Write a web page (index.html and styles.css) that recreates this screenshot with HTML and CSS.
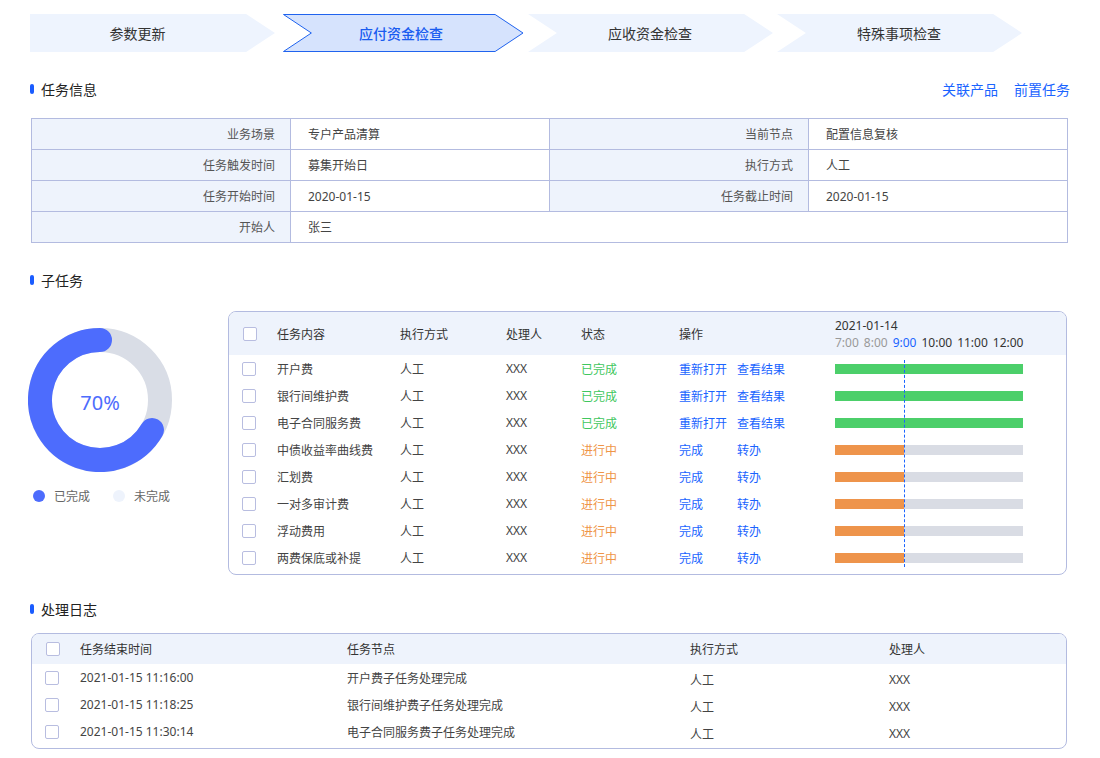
FILE: index.html
```html
<!DOCTYPE html>
<html lang="zh-CN">
<head>
<meta charset="utf-8">
<title>应付资金检查</title>
<link rel="stylesheet" href="styles.css">
</head>
<body>
<div class="page">
  <div class="steps">
    <div class="step first">
      <svg class="step-bg" viewBox="0 0 246 38" preserveAspectRatio="none"><polygon points="0,0 217,0 246,19 217,38 0,38" fill="#eef4fe"/></svg>
      <span>参数更新</span>
    </div>
    <div class="step active">
      <svg class="step-bg" viewBox="0 0 246 38" preserveAspectRatio="none"><polygon points="4.5,0.5 217,0.5 245,19 217,37.5 4.5,37.5 32.5,19" fill="#d6e3fd" stroke="#1f62ee" stroke-width="1"/></svg>
      <span>应付资金检查</span>
    </div>
    <div class="step">
      <svg class="step-bg" viewBox="0 0 246 38" preserveAspectRatio="none"><polygon points="0,0 217,0 246,19 217,38 0,38 29,19" fill="#eef4fe"/></svg>
      <span>应收资金检查</span>
    </div>
    <div class="step">
      <svg class="step-bg" viewBox="0 0 246 38" preserveAspectRatio="none"><polygon points="0,0 217,0 246,19 217,38 0,38 29,19" fill="#eef4fe"/></svg>
      <span>特殊事项检查</span>
    </div>
  </div>

  <div class="sec-head">
    <div class="sec-title">任务信息</div>
    <div class="sec-links"><a>关联产品</a><a>前置任务</a></div>
  </div>

  <div class="info">
    <div class="lab">业务场景</div><div class="val">专户产品清算</div>
    <div class="lab">当前节点</div><div class="val">配置信息复核</div>
    <div class="lab">任务触发时间</div><div class="val">募集开始日</div>
    <div class="lab">执行方式</div><div class="val">人工</div>
    <div class="lab">任务开始时间</div><div class="val">2020-01-15</div>
    <div class="lab">任务截止时间</div><div class="val">2020-01-15</div>
    <div class="lab">开始人</div><div class="val wide">张三</div>
  </div>

  <div class="sec-head sub-head">
    <div class="sec-title">子任务</div>
  </div>

  <div class="sub-row">
    <div class="chart">
      <div class="donut">
        <svg width="144" height="144" viewBox="0 0 144 144">
          <circle cx="72" cy="72" r="60" fill="none" stroke="#d9dde6" stroke-width="24"/>
          <path d="M72 12 A60 60 0 1 0 123.96 102" fill="none" stroke="#4d6cfd" stroke-width="24" stroke-linecap="round"/>
        </svg>
        <div class="pct">70%</div>
      </div>
      <div class="legend">
        <span class="lg"><i class="dot done"></i>已完成</span>
        <span class="lg"><i class="dot todo"></i>未完成</span>
      </div>
    </div>

    <div class="sub-table">
      <div class="st-head st-grid">
        <div class="cb-cell"><span class="cb"></span></div>
        <div>任务内容</div>
        <div>执行方式</div>
        <div>处理人</div>
        <div>状态</div>
        <div>操作</div>
        <div class="tl">
          <div>2021-01-14</div>
          <div class="times"><span class="past">7:00</span><span class="past">8:00</span><span class="now">9:00</span><span>10:00</span><span>11:00</span><span>12:00</span></div>
        </div>
      </div>
      <div class="st-body">
        <div class="st-row st-grid">
          <div class="cb-cell"><span class="cb"></span></div><div>开户费</div><div>人工</div><div>XXX</div><div class="ok">已完成</div>
          <div class="ops"><a>重新打开</a><a>查看结果</a></div><div><div class="bar green"></div></div>
        </div>
        <div class="st-row st-grid">
          <div class="cb-cell"><span class="cb"></span></div><div>银行间维护费</div><div>人工</div><div>XXX</div><div class="ok">已完成</div>
          <div class="ops"><a>重新打开</a><a>查看结果</a></div><div><div class="bar green"></div></div>
        </div>
        <div class="st-row st-grid">
          <div class="cb-cell"><span class="cb"></span></div><div>电子合同服务费</div><div>人工</div><div>XXX</div><div class="ok">已完成</div>
          <div class="ops"><a>重新打开</a><a>查看结果</a></div><div><div class="bar green"></div></div>
        </div>
        <div class="st-row st-grid">
          <div class="cb-cell"><span class="cb"></span></div><div>中债收益率曲线费</div><div>人工</div><div>XXX</div><div class="ing">进行中</div>
          <div class="ops"><a>完成</a><a>转办</a></div><div><div class="bar"><div class="fill"></div></div></div>
        </div>
        <div class="st-row st-grid">
          <div class="cb-cell"><span class="cb"></span></div><div>汇划费</div><div>人工</div><div>XXX</div><div class="ing">进行中</div>
          <div class="ops"><a>完成</a><a>转办</a></div><div><div class="bar"><div class="fill"></div></div></div>
        </div>
        <div class="st-row st-grid">
          <div class="cb-cell"><span class="cb"></span></div><div>一对多审计费</div><div>人工</div><div>XXX</div><div class="ing">进行中</div>
          <div class="ops"><a>完成</a><a>转办</a></div><div><div class="bar"><div class="fill"></div></div></div>
        </div>
        <div class="st-row st-grid">
          <div class="cb-cell"><span class="cb"></span></div><div>浮动费用</div><div>人工</div><div>XXX</div><div class="ing">进行中</div>
          <div class="ops"><a>完成</a><a>转办</a></div><div><div class="bar"><div class="fill"></div></div></div>
        </div>
        <div class="st-row st-grid">
          <div class="cb-cell"><span class="cb"></span></div><div>两费保底或补提</div><div>人工</div><div>XXX</div><div class="ing">进行中</div>
          <div class="ops"><a>完成</a><a>转办</a></div><div><div class="bar"><div class="fill"></div></div></div>
        </div>
        <div class="now-line"></div>
      </div>
    </div>
  </div>

  <div class="sec-head log-head">
    <div class="sec-title">处理日志</div>
  </div>

  <div class="log-table">
    <div class="lt-head lt-grid">
      <div class="cb-cell"><span class="cb"></span></div>
      <div>任务结束时间</div><div>任务节点</div><div>执行方式</div><div>处理人</div>
    </div>
    <div class="lt-body">
      <div class="lt-row lt-grid">
        <div class="cb-cell"><span class="cb"></span></div>
        <div>2021-01-15 11:16:00</div><div>开户费子任务处理完成</div><div class="lo">人工</div><div class="lo">XXX</div>
      </div>
      <div class="lt-row lt-grid">
        <div class="cb-cell"><span class="cb"></span></div>
        <div>2021-01-15 11:18:25</div><div>银行间维护费子任务处理完成</div><div class="lo">人工</div><div class="lo">XXX</div>
      </div>
      <div class="lt-row lt-grid">
        <div class="cb-cell"><span class="cb"></span></div>
        <div>2021-01-15 11:30:14</div><div>电子合同服务费子任务处理完成</div><div class="lo">人工</div><div class="lo">XXX</div>
      </div>
    </div>
  </div>
</div>
</body>
</html>
```

FILE: styles.css
```css
* { box-sizing: border-box; }
body {
  margin: 0;
  background: #fff;
  color: #333;
  font-family: "Noto Sans", "Noto Sans CJK SC", sans-serif;
}
.page {
  width: 1100px;
  padding: 14px 32px 0 30px;
}
a { color: #1a64ff; text-decoration: none; cursor: pointer; }

/* steps */
.steps { display: flex; height: 38px; }
.step {
  position: relative;
  isolation: isolate;
  width: 245px;
  height: 38px;
  display: flex;
  align-items: center;
  justify-content: center;
  padding: 0 30px 0 29px;
  font-size: 14px;
  color: #333;
}
.step + .step { margin-left: 4px; }
.step.first { padding-left: 0; }
.step-bg {
  position: absolute;
  left: 0; top: 0;
  width: 100%; height: 100%;
  z-index: -1;
}
.step.active { color: #1a5cf0; font-weight: 500; }

/* section heads */
.sec-head {
  display: flex;
  align-items: center;
  height: 22px;
  margin-top: 26px;
}
.sec-title {
  display: flex;
  align-items: center;
  gap: 7px;
  font-size: 14px;
  font-weight: 400;
  color: #222;
}
.sec-title::before {
  content: "";
  width: 4px;
  height: 10px;
  border-radius: 2px;
  background: #1a5cff;
}
.sec-links {
  margin-left: auto;
  margin-right: -2px;
  display: flex;
  gap: 16px;
  font-size: 14px;
}

/* info grid */
.info {
  margin: 18px 0 0 1px;
  width: 1037px;
  display: grid;
  grid-template-columns: repeat(4, 1fr);
  gap: 1px;
  padding: 1px;
  background: #b3bbe0;
  font-size: 12px;
}
.info > div { height: 30px; display: flex; align-items: center; }
.lab { background: #eef3fc; color: #555; justify-content: flex-end; padding-right: 15px; }
.val { background: #fff; color: #444; padding-left: 17px; }
.val.wide { grid-column: span 3; }

/* subtasks */
.sub-head { margin-top: 26px; }
.sub-row { display: flex; margin-top: 20px; }
.chart { width: 198px; flex: none; }
.donut { position: relative; width: 144px; height: 144px; margin: 17px 0 0 -2px; }
.donut svg { display: block; }
.pct {
  position: absolute;
  left: 0; top: 0;
  width: 100%; height: 100%;
  display: flex;
  align-items: center;
  justify-content: center;
  padding-top: 4px;
  font-size: 20px;
  color: #4d6cfd;
}
.legend { display: flex; margin: 16px 0 0 3px; height: 16px; align-items: center; font-size: 12px; color: #666; }
.lg { display: flex; align-items: center; gap: 9px; width: 80px; }
.dot { width: 12px; height: 12px; border-radius: 50%; display: block; }
.dot.done { background: #4d6cfd; }
.dot.todo { background: #eef3fc; }

.sub-table {
  width: 839px;
  border: 1px solid #b3bbe0;
  border-radius: 8px;
  overflow: hidden;
  font-size: 12px;
}
.st-grid {
  display: grid;
  grid-template-columns: 48px 123px 106px 75px 98px 156px 1fr;
  align-items: center;
}
.st-head { height: 43px; background: #eef3fc; color: #333; }
.st-head .cb-cell { padding-left: 14px; }
.cb-cell { padding-left: 13px; display: flex; align-items: center; }
.cb {
  display: block;
  width: 14px;
  height: 14px;
  border: 1px solid #b8bde0;
  border-radius: 2px;
  background: #fff;
}
.tl { line-height: 17px; }
.times { display: flex; gap: 5px; }
.times .past { color: #999; }
.times .now { color: #1a64ff; }

.st-body { position: relative; padding-bottom: 3px; }
.st-row { height: 27px; color: #444; }
.ok { color: #3fc75e; }
.ing { color: #ef9547; }
.ops { display: flex; }
.ops a { width: 58px; }
.bar { width: 188px; height: 10px; background: #d9dce4; display: flex; }
.bar.green { background: #4ccf6a; }
.bar .fill { width: 69px; background: #ee944b; }
.now-line {
  position: absolute;
  left: 675px;
  top: 5px;
  bottom: 7px;
  border-left: 1px dashed #1a64ff;
}

/* log */
.log-head { margin-top: 23px; }
.log-table {
  margin: 13px 0 0 1px;
  width: 1036px;
  border: 1px solid #b3bbe0;
  border-radius: 8px;
  overflow: hidden;
  font-size: 12px;
  color: #444;
}
.lt-grid {
  display: grid;
  grid-template-columns: 48px 267px 343px 199px 1fr;
  align-items: center;
}
.lt-head { height: 30px; background: #eef3fc; color: #333; }
.lt-head .cb-cell { padding-left: 14px; }
.lt-body { padding-bottom: 3px; }
.lt-row { height: 27px; }
.lo { padding-top: 4px; }
```
